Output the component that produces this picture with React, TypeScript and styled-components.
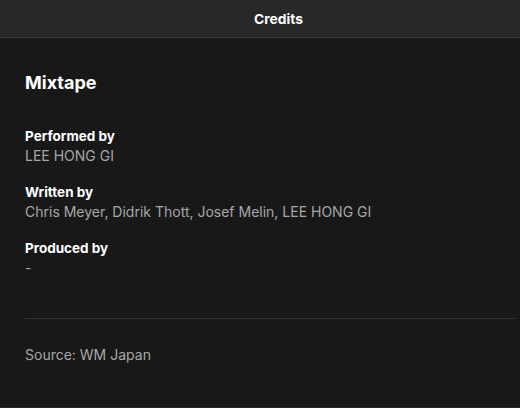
import React from "react";
import styled, { createGlobalStyle } from "styled-components";

const Global = createGlobalStyle`
  html, body { margin: 0; padding: 0; background: #181818; }
  body { font-family: Inter, "Liberation Sans", sans-serif; -webkit-font-smoothing: antialiased; }
`;

const Window = styled.div`
  width: 520px;
  height: 408px;
  display: flex;
  flex-direction: column;
  background: #181818;
  border-bottom: 1px solid #2a2a2a;
  box-sizing: border-box;
`;

const Header = styled.header`
  height: 37px;
  flex: none;
  display: flex;
  align-items: center;
  justify-content: center;
  padding-left: 37px;
  background: #282828;
  border-bottom: 1px solid #363636;
  color: #ffffff;
  font-size: 13.8px;
  font-weight: 700;
`;

const Body = styled.main`
  display: flex;
  flex-direction: column;
  padding: 33px 4px 0 25px;
`;

const Title = styled.h1`
  margin: 0 0 32px;
  font-size: 18px;
  line-height: 24px;
  font-weight: 700;
  color: #ffffff;
`;

const Section = styled.section`
  display: flex;
  flex-direction: column;
  margin-bottom: 18px;
`;

const Label = styled.div`
  font-size: 13.5px;
  line-height: 19px;
  font-weight: 700;
  color: #ffffff;
`;

const Value = styled.div`
  font-size: 14px;
  line-height: 19px;
  color: #a7a7a7;
`;

const Divider = styled.hr`
  margin: 23px 0 0;
  border: none;
  height: 1px;
  background: #333333;
`;

const Source = styled.div`
  margin-top: 26px;
  font-size: 14px;
  line-height: 19px;
  color: #a7a7a7;
`;

const credits = [
  { label: "Performed by", value: "LEE HONG GI" },
  { label: "Written by", value: "Chris Meyer, Didrik Thott, Josef Melin, LEE HONG GI" },
  { label: "Produced by", value: "-" },
];

export default function App() {
  return (
    <>
      <Global />
      <Window>
        <Header>Credits</Header>
        <Body>
          <Title>Mixtape</Title>
          {credits.map((c) => (
            <Section key={c.label}>
              <Label>{c.label}</Label>
              <Value>{c.value}</Value>
            </Section>
          ))}
          <Divider />
          <Source>Source: WM Japan</Source>
        </Body>
      </Window>
    </>
  );
}
